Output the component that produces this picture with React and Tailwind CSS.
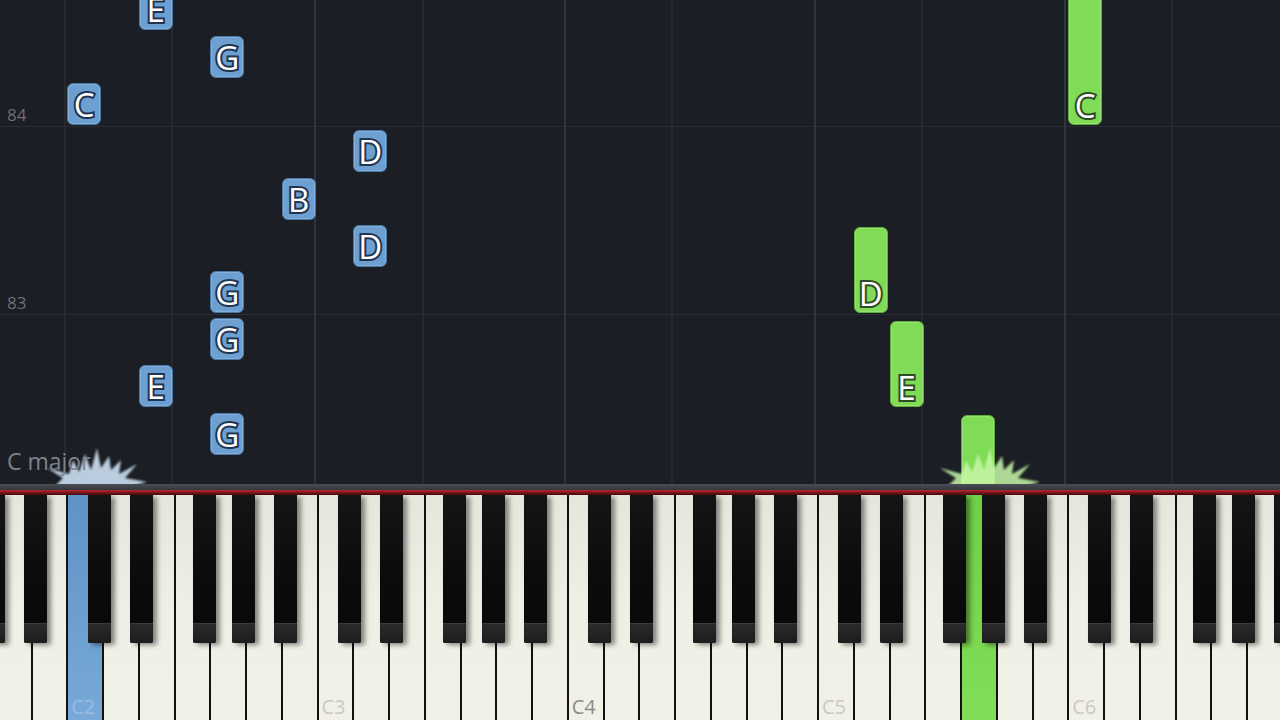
import React from 'react'

const W = 35.75
const C2 = 66.25
const col = (i) => C2 + i * W

const blueNotes = [
	{ l: 'E', c: 2, top: -12 },
	{ l: 'G', c: 4, top: 36 },
	{ l: 'C', c: 0, top: 83 },
	{ l: 'D', c: 8, top: 130 },
	{ l: 'B', c: 6, top: 178 },
	{ l: 'D', c: 8, top: 225 },
	{ l: 'G', c: 4, top: 271 },
	{ l: 'G', c: 4, top: 318 },
	{ l: 'E', c: 2, top: 365 },
	{ l: 'G', c: 4, top: 413 },
]

const greenNotes = [
	{ l: 'C', c: 28, top: -10, h: 135 },
	{ l: 'D', c: 22, top: 227, h: 86 },
	{ l: 'E', c: 23, top: 321, h: 86 },
	{ l: '', c: 25, top: 415, h: 80 },
]

// grid columns between vertical lines (C and F boundaries)
const gridCols = [
	{ w: 66, strong: false },
	{ w: 107, strong: false },
	{ w: 143, strong: true },
	{ w: 108, strong: false },
	{ w: 142, strong: true },
	{ w: 107, strong: false },
	{ w: 143, strong: true },
	{ w: 107, strong: false },
	{ w: 143, strong: true },
	{ w: 107, strong: false },
]

const whiteNames = ['C', 'D', 'E', 'F', 'G', 'A', 'B']
const blackOffsets = [22, 64, 127, 166, 208]

function Burst({ x, fill, glow }) {
	// spark splash where the note meets the keys
	return (
		<svg className="absolute" style={{ left: x - 55, top: 424 }} width="140" height="62" viewBox="0 0 140 62">
			<defs>
				<radialGradient id={'g' + x} cx="50%" cy="100%" r="55%">
					<stop offset="0%" stopColor={glow} stopOpacity="0.7" />
					<stop offset="60%" stopColor={glow} stopOpacity="0.2" />
					<stop offset="100%" stopColor={glow} stopOpacity="0" />
				</radialGradient>
				<filter id={'b' + x}>
					<feGaussianBlur stdDeviation="1.3" />
				</filter>
			</defs>
			<ellipse cx="70" cy="62" rx="70" ry="40" fill={`url(#g${x})`} />
			<polygon
				filter={`url(#b${x})`}
				fill={fill}
				opacity="0.85"
				points="26,62 34,54 18,44 40,50 44,36 50,48 56,30 62,46 68,24 72,44 80,32 82,46 92,36 90,50 108,40 96,54 118,58 104,62"
			/>
		</svg>
	)
}

function Note({ left, top, h, color, letter, bottom }) {
	const blue = color === 'blue'
	return (
		<div
			className={
				'absolute w-[34px] rounded-[6px] flex justify-center ' +
				(bottom ? 'items-end pb-[2px] ' : 'items-center ') +
				(blue
					? 'bg-[#6d9fd0] border border-[#4a77a4] shadow-[inset_0_0_0_1px_rgba(170,205,240,0.35)]'
					: 'bg-[#80db56] border border-[#5fae3a] shadow-[inset_0_0_0_1px_rgba(190,245,160,0.35)]')
			}
			style={{ left: left + 1, top, height: h }}
		>
			<span
				className={
					'font-["Open_Sans",sans-serif] text-[33px] leading-none text-white [paint-order:stroke_fill] ' +
					(blue ? '[-webkit-text-stroke:4px_#1e3552]' : '[-webkit-text-stroke:4px_#2f4a26]')
				}
			>
				{letter}
			</span>
		</div>
	)
}

function Roll() {
	return (
		<div className="relative h-[484px] overflow-hidden bg-[#1b1e24]">
			<div className="flex flex-col h-full">
				<div className="h-[127px] border-b border-[#2a2d33]" />
				<div className="h-[188px] border-b border-[#2a2d33]" />
			</div>
			<div className="absolute inset-0 flex">
				{gridCols.map((c, i) => (
					<div
						key={i}
						className={'flex-none h-full border-r-2 ' + (c.strong ? 'border-[#31343b]' : 'border-[#262930]')}
						style={{ width: c.w }}
					/>
				))}
			</div>
			<div className="absolute left-[7px] top-[102px] font-['Open_Sans',sans-serif] text-[17px] text-[#6c6f75]">84</div>
			<div className="absolute left-[7px] top-[290px] font-['Open_Sans',sans-serif] text-[17px] text-[#6c6f75]">83</div>

			{blueNotes.map((n, i) => (
				<Note key={'b' + i} left={col(n.c)} top={n.top} h={42} color="blue" letter={n.l} />
			))}
			{greenNotes.map((n, i) => (
				<Note key={'g' + i} left={col(n.c)} top={n.top} h={n.h} color="green" letter={n.l} bottom />
			))}

			<Burst x={84} fill="#d6ebff" glow="#9fcaf5" />
			<Burst x={977} fill="#c8f7a8" glow="#9ef07a" />

			<div className="absolute left-[7px] top-[444px] font-['Open_Sans',sans-serif] text-[23px] text-[#7f8289]">C major</div>
		</div>
	)
}

function Keyboard() {
	const whites = []
	// starts at A1, partly off the left edge
	for (let i = 0; i < 37; i++) {
		const n = i + 5
		const name = whiteNames[n % 7]
		const oct = 1 + Math.floor(n / 7)
		whites.push({ name, oct, label: name === 'C' ? 'C' + oct : null })
	}
	const blacks = []
	for (let o = 1; o <= 6; o++) {
		const base = C2 + (o - 2) * 250
		blackOffsets.forEach((off, j) => {
			const x = base + off
			if (x < 1280 && x + 23 > 0) blacks.push({ x, key: o + '-' + j })
		})
	}
	return (
		<div className="relative h-[225px] overflow-hidden bg-[#111]">
			<div className="flex h-full ml-[-5.25px]">
				{whites.map((k, i) => {
					const lit = k.name === 'C' && k.oct === 2 ? 'blue' : k.name === 'G' && k.oct === 5 ? 'green' : null
					return (
						<div
							key={i}
							className={
								'relative flex-none w-[35.75px] h-full border-l-2 border-[#121212] flex items-end pl-[3px] pb-[3px] ' +
								(lit === 'blue'
									? 'bg-linear-to-b from-[#5f93c6] to-[#78a9d8]'
									: lit === 'green'
									? 'bg-linear-to-b from-[#6fcf45] to-[#82de57]'
									: 'bg-linear-to-b from-[#e6e6dc] via-[#efefe6] to-[#f1f1e8]')
							}
						>
							{k.label && (
								<span
									className={
										"font-['Open_Sans',sans-serif] text-[20px] leading-none " +
										(k.oct === 4 ? 'text-[#8a8a86]' : lit === 'blue' ? 'text-[#9bbbe0]' : 'text-[#c9c9c2]')
									}
								>
									{k.label}
								</span>
							)}
						</div>
					)
				})}
			</div>
			{blacks.map((b) => (
				<div
					key={b.key}
					className="absolute top-0 h-[148px] w-[23px] flex flex-col rounded-b-[2px] bg-linear-to-b from-[#151515] via-[#0c0c0c] to-[#080808] shadow-[4px_2px_5px_rgba(0,0,0,0.45)]"
					style={{ left: b.x }}
				>
					<div className="flex-1" />
					<div className="h-[20px] bg-linear-to-b from-[#2a2a2a] to-[#1c1c1c] border-t border-[#3a3a3a] rounded-b-[2px]" />
				</div>
			))}
		</div>
	)
}

export default function App() {
	return (
		<div className="w-[1280px] h-[720px] overflow-hidden flex flex-col bg-[#1b1e24]">
			<Roll />
			<div className="h-[6px] bg-linear-to-b from-[#4b4e56] to-[#33363c]" />
			<div className="h-[5px] bg-linear-to-b from-[#c1262f] to-[#3d0a0e]" />
			<Keyboard />
		</div>
	)
}
